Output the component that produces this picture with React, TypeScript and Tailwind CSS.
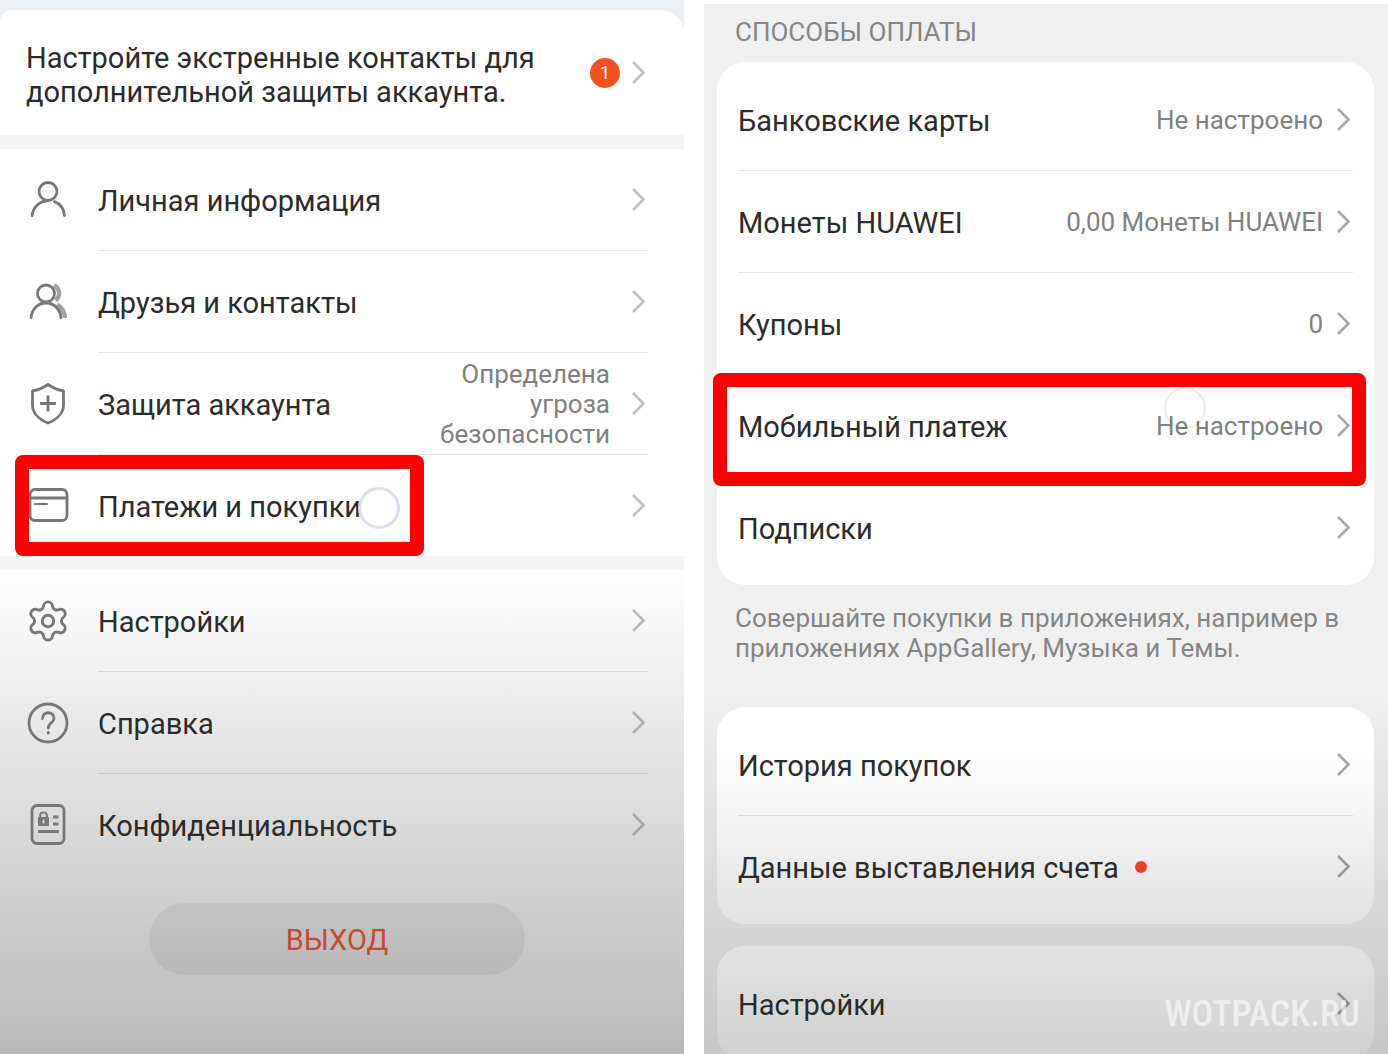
import React, { ReactNode } from "react";
import { Settings } from "lucide-react";

interface RowProps {
  label: string;
  icon?: ReactNode;
  value?: ReactNode;
  dot?: boolean;
  last?: boolean;
  children?: ReactNode;
}

const Chevron = () => (
  <svg
    width="18"
    height="26"
    viewBox="0 0 18 26"
    fill="none"
    stroke="currentColor"
    strokeWidth="2.6"
    className="shrink-0"
  >
    <path d="M3 2L13.5 12.500L3 23" />
  </svg>
);

const Icon = ({ children }: { children: ReactNode }) => (
  <svg
    width="44"
    height="44"
    viewBox="0 0 44 44"
    fill="none"
    stroke="currentColor"
    strokeWidth="2.8"
    strokeLinecap="round"
    strokeLinejoin="round"
  >
    {children}
  </svg>
);

const PersonIcon = () => (
  <Icon>
    <circle cx="22" cy="13.5" r="9" />
    <path d="M6 37.5C7 29.5 13 23.5 20.5 22.8" />
    <path d="M28.5 23.6C34.5 26 38 31 38.5 37.5" />
  </Icon>
);

const FriendsIcon = () => (
  <Icon>
    <circle cx="20" cy="13.5" r="8.5" />
    <path d="M5 37.5C6 29 12 23 20 23S34 29 35 37.5" />
    <path d="M28 5.5C34.5 8.5 34.500 16.5 29.5 20.5" strokeWidth="4.5" strokeLinecap="butt" opacity="0.7" />
    <path d="M31 24.5C36 27.500 38.500 31 39 38" strokeWidth="4.5" strokeLinecap="butt" opacity="0.7" />
  </Icon>
);

const ShieldIcon = () => (
  <Icon>
    <path d="M22 2.5C17 6 12 8 6.5 9V23C6.5 31 13 37.5 22 41C31 37.5 37.5 31 37.5 23V9C32 8 27 6 22 2.5Z" />
    <path d="M22 13.5V29.5M14 21.5H30" strokeLinecap="butt" />
  </Icon>
);

const CardIcon = () => (
  <Icon>
    <rect x="4" y="5.5" width="37" height="31" rx="5" />
    <path d="M4 14H41" />
    <path d="M9 20H21" strokeWidth="2" />
  </Icon>
);

const HelpIcon = () => (
  <Icon>
    <circle cx="22" cy="22" r="19" />
    <path d="M16.5 17.5C16.5 9.8 28 9.8 28 17.5C28 21.8 22.3 21.5 22.3 27" />
    <path d="M22.3 31.5V32" strokeWidth="3" />
  </Icon>
);

const PrivacyIcon = () => (
  <Icon>
    <rect x="6" y="2.5" width="32" height="38" rx="5" />
    <rect x="12" y="14" width="11" height="9" rx="1" fill="currentColor" stroke="none" />
    <path d="M14.2 14V12C14.2 8.8 20.8 8.8 20.8 12V14" strokeWidth="2" />
    <path d="M17.5 17.5V19.5" stroke="#d0d0d0" strokeWidth="2" />
    <path d="M27 14H32.5M27 21H32.5M12 28.5H33" strokeLinecap="butt" />
  </Icon>
);

const Row = ({ label, icon, value, dot, last, children }: RowProps) => (
  <li className="relative flex gap-7 text-[#777]">
    {icon && <span className="flex w-11 shrink-0 items-center justify-center">{icon}</span>}
    <button
      type="button"
      className={`flex flex-1 items-center text-left ${
        last ? "h-[101px]" : "h-[102px] border-b border-black/10"
      }`}
    >
      <span className="pt-[2px] text-[29px] leading-9 text-[#2b2b2b]">{label}</span>
      {dot && <span className="ml-4 size-3 rounded-full bg-[#e8402c]" />}
      <span className="ml-auto text-right text-[26px] leading-[30px] text-[#808080]">{value}</span>
      <span className={icon ? "ml-5 text-black/25" : "ml-3 text-black/35"}>
        <Chevron />
      </span>
    </button>
    {children}
  </li>
);

const AccountPanel = () => (
  <section className="flex min-w-0 flex-col bg-[#ebf0f5]">
    <div className="mt-[10px] rounded-tl-[12px] rounded-tr-3xl bg-white">
      <button
        type="button"
        className="flex h-[125px] w-full items-center pr-9 pl-[26px] text-left"
      >
        <span className="flex-1 pt-1 text-[29px] leading-[34px] text-[#2b2b2b]">
          Настройте экстренные контакты для
          <br />
          дополнительной защиты аккаунта.
        </span>
        <span className="mr-[10px] flex size-[30px] items-center justify-center rounded-full bg-[#f4511e] text-lg text-white">
          1
        </span>
        <span className="text-black/25">
          <Chevron />
        </span>
      </button>
    </div>
    <ul className="border-t-[14px] border-[#f5f5f5] bg-white pr-9 pl-[26px]">
      <Row label="Личная информация" icon={<PersonIcon />} />
      <Row label="Друзья и контакты" icon={<FriendsIcon />} />
      <Row
        label="Защита аккаунта"
        icon={<ShieldIcon />}
        value={
          <>
            Определена
            <br />
            угроза
            <br />
            безопасности
          </>
        }
      />
      <Row label="Платежи и покупки" icon={<CardIcon />} last>
        <span className="pointer-events-none absolute inset-y-0 -left-[11px] w-[409px] rounded-lg border-[14px] border-[#fe0000]" />
        <span className="pointer-events-none absolute top-8 left-[332px] size-[42px] rounded-full border-3 border-[#dcdcea] bg-white/70" />
      </Row>
    </ul>
    <div className="flex-1 border-t-[14px] border-[#f5f5f5] bg-linear-to-b from-white to-[#b9b9b9]">
      <ul className="pr-9 pl-[26px]">
        <Row label="Настройки" icon={<Settings size={46} strokeWidth={1.5} className="shrink-0" />} />
        <Row label="Справка" icon={<HelpIcon />} />
        <Row label="Конфиденциальность" icon={<PrivacyIcon />} last />
      </ul>
      <div className="flex justify-center pt-7 pr-[10px]">
        <button
          type="button"
          className="h-[72px] w-[376px] rounded-full bg-black/6 pt-1 text-[29px] text-[#c9492f]"
        >
          ВЫХОД
        </button>
      </div>
    </div>
  </section>
);

const PaymentsPanel = () => (
  <section className="mt-1 flex min-w-0 flex-col bg-linear-to-b from-[#f0f0f1] from-65% to-[#c6c6c6] pr-[14px] pl-[13px]">
    <h2 className="px-[18px] pt-3 pb-[14px] text-[26px] leading-8 text-[#858585]">СПОСОБЫ ОПЛАТЫ</h2>
    <ul className="rounded-[28px] bg-white px-[21px] py-[7px]">
      <Row label="Банковские карты" value="Не настроено" />
      <Row label="Монеты HUAWEI" value="0,00 Монеты HUAWEI" />
      <Row label="Купоны" value="0" />
      <Row label="Мобильный платеж" value="Не настроено">
        <span className="pointer-events-none absolute top-3 right-[147px] size-[42px] rounded-full border-2 border-black/8" />
        <span className="pointer-events-none absolute -top-[2px] -right-[13px] -bottom-[9px] -left-[25px] rounded-lg border-[14px] border-[#fe0000]" />
      </Row>
      <Row label="Подписки" last />
    </ul>
    <p className="px-[18px] pt-[18px] pb-11 text-[26px] leading-[30px] text-[#858585]">
      Совершайте покупки в приложениях, например в
      <br />
      приложениях AppGallery, Музыка и Темы.
    </p>
    <ul className="rounded-[28px] bg-linear-to-b from-white from-20% to-[#e2e2e2] px-[21px] py-[7px]">
      <Row label="История покупок" />
      <Row label="Данные выставления счета" dot last />
    </ul>
    <ul className="mt-[22px] rounded-[28px] bg-linear-to-b from-[#e2e2e2] to-[#d0d0d0] px-[21px] py-[7px]">
      <Row label="Настройки" last />
    </ul>
  </section>
);

const App = () => {
  return (
    <main className="relative grid h-screen grid-cols-2 gap-5 overflow-hidden bg-white font-['Roboto',sans-serif]">
      <AccountPanel />
      <PaymentsPanel />
      <span className="pointer-events-none absolute right-7 bottom-5 font-['Roboto_Condensed','Roboto',sans-serif] text-4xl leading-10 font-medium text-white/60">
        WOTPACK.RU
      </span>
    </main>
  );
};

export default App;
